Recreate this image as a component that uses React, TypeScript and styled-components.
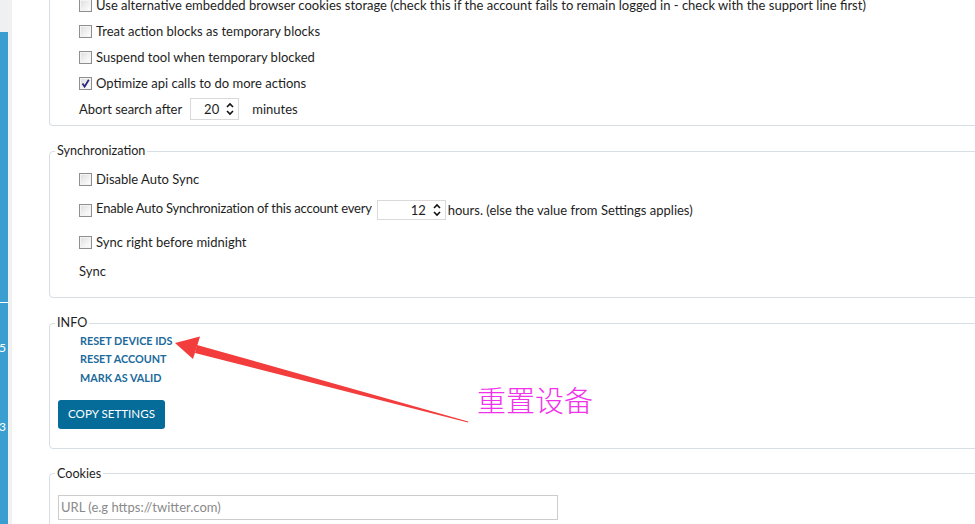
import React from 'react';
import styled, { createGlobalStyle } from 'styled-components';

const GlobalStyle = createGlobalStyle`
  html, body {
    margin: 0;
    padding: 0;
    background: #ffffff;
  }
  body {
    font-family: Lato, "Open Sans", "Liberation Sans", sans-serif;
    color: #1e1e1e;
  }
`;

const Page = styled.div`
  display: flex;
  width: 975px;
  height: 524px;
  overflow: hidden;
  position: relative;
  background: #ffffff;
`;

const Sidebar = styled.div`
  width: 8px;
  flex: none;
  display: flex;
  flex-direction: column;
  background: #3a9fd0;
  border-right: 4px solid #f1f1f1;
  overflow: hidden;
`;

const SideTop = styled.div`
  height: 32px;
  background: #eef0f1;
`;

const SideBlock = styled.div<{ h: number }>`
  height: ${({ h }) => h}px;
  border-bottom: 1px solid #ffffff;
`;

const SideItem = styled.div<{ h: number }>`
  height: ${({ h }) => h}px;
  display: flex;
  align-items: center;
  justify-content: flex-end;
  padding-right: 2px;
  color: #ffffff;
  font-size: 12px;
  white-space: nowrap;
`;

const Main = styled.div`
  flex: 1;
  padding-left: 37px;
  margin-right: -40px;
  display: flex;
  flex-direction: column;
  gap: 18px;
`;

const Fieldset = styled.fieldset<{ cut?: boolean }>`
  margin: ${({ cut }) => (cut ? '-8px 0 0 0' : '0')};
  border: 1px solid #d7dee5;
  border-top: ${({ cut }) => (cut ? 'none' : '1px solid #d7dee5')};
  border-radius: ${({ cut }) => (cut ? '0 0 4px 4px' : '4px')};
  padding: 0 0 0 5px;
  min-width: 0;
`;

const Legend = styled.legend`
  font-size: 12.6px;
  line-height: 14px;
  padding: 0 2px;
  color: #1e1e1e;
`;

const Body = styled.div<{ pt?: number; pb: number }>`
  padding: ${({ pt }) => pt ?? 0}px 0 ${({ pb }) => pb}px 24px;
  display: flex;
  flex-direction: column;
  align-items: flex-start;
`;

const Row = styled.div<{ h: number }>`
  height: ${({ h }) => h}px;
  display: flex;
  align-items: center;
  font-size: 13px;
  white-space: nowrap;
`;

const Box = styled.span`
  width: 11px;
  height: 11px;
  border: 1px solid #8e8f8f;
  background: linear-gradient(135deg, #dcdcdc 0%, #f3f3f3 60%, #ffffff 100%);
  box-shadow: inset 0 0 0 1px #f4f4f4;
  margin-right: 4px;
  display: flex;
  align-items: center;
  justify-content: center;
  flex: none;
`;

const Label = styled.span<{ lift?: number; tight?: boolean }>`
  margin-top: ${({ lift }) => -(lift ?? 0)}px;
  letter-spacing: ${({ tight }) => (tight ? '-0.2px' : 'normal')};
`;

const Spinner = styled.div<{ w: number; h: number; ml: number; mr: number }>`
  width: ${({ w }) => w}px;
  height: ${({ h }) => h}px;
  margin-left: ${({ ml }) => ml}px;
  margin-right: ${({ mr }) => mr}px;
  box-sizing: border-box;
  border: 1px solid #d9d9d9;
  display: flex;
  align-items: center;
  justify-content: flex-end;
  padding-right: 4px;
  gap: 7px;
  font-size: 13px;
`;

const Arrows = styled.svg`
  width: 8px;
  height: 14px;
`;

const LinkButton = styled.div`
  height: 18.5px;
  display: flex;
  align-items: center;
  padding-left: 1px;
  font-size: 10.8px;
  font-weight: 700;
  color: #1b6a9b;
`;

const Button = styled.button`
  margin-top: 13px;
  margin-left: -21px;
  height: 29px;
  width: 107px;
  border: none;
  border-radius: 3px;
  background: #056b99;
  color: #ffffff;
  font-family: inherit;
  font-size: 11.6px;
  padding: 0 0 2px 0;
`;

const Input = styled.input`
  margin-left: -21px;
  width: 500px;
  height: 25px;
  box-sizing: border-box;
  border: 1px solid #cccccc;
  padding: 0 2px;
  font-family: inherit;
  font-size: 13px;
  color: #333;
  &::placeholder {
    color: #8a8a8a;
  }
`;

const Overlay = styled.svg`
  position: absolute;
  left: 0;
  top: 0;
  width: 975px;
  height: 524px;
  pointer-events: none;
`;

const Note = styled.div`
  position: absolute;
  left: 477px;
  top: 378px;
  font-family: "Noto Sans CJK SC", sans-serif;
  font-size: 29px;
  font-weight: 300;
  color: #f032ea;
`;

const Check = () => (
  <svg width="9" height="9" viewBox="0 0 9 9">
    <path d="M1.5 4.5 L3.6 7.6 L7.8 0.8" fill="none" stroke="#27287a" strokeWidth="1.8" />
  </svg>
);

const UpDown = () => (
  <Arrows viewBox="0 0 8 14">
    <path d="M1 5 L4 2 L7 5" fill="none" stroke="#111" strokeWidth="1.6" />
    <path d="M1 9 L4 12 L7 9" fill="none" stroke="#111" strokeWidth="1.6" />
  </Arrows>
);

const CheckRow = ({ h, label, checked }: { h: number; label: string; checked?: boolean }) => (
  <Row h={h}>
    <Box>{checked && <Check />}</Box>
    <Label>{label}</Label>
  </Row>
);

export default function App() {
  return (
    <>
      <GlobalStyle />
      <Page>
        <Sidebar>
          <SideTop />
          <SideBlock h={270} />
          <SideItem h={88}>5</SideItem>
          <SideItem h={70}>3</SideItem>
        </Sidebar>
        <Main>
          <Fieldset cut>
            <Body pb={3}>
              <CheckRow
                h={26}
                label="Use alternative embedded browser cookies storage (check this if the account fails to remain logged in - check with the support line first)"
              />
              <CheckRow h={26} label="Treat action blocks as temporary blocks" />
              <CheckRow h={26} label="Suspend tool when temporary blocked" />
              <CheckRow h={26} label="Optimize api calls to do more actions" checked />
              <Row h={26}>
                <Label>Abort search after</Label>
                <Spinner w={49} h={22} ml={8} mr={13}>
                  20
                  <UpDown />
                </Spinner>
                <Label>minutes</Label>
              </Row>
            </Body>
          </Fieldset>

          <Fieldset>
            <Legend>Synchronization</Legend>
            <Body pt={6} pb={13}>
              <CheckRow h={30} label="Disable Auto Sync" />
              <Row h={32}>
                <Box />
                <Label lift={4} tight>
                  Enable Auto Synchronization of this account every
                </Label>
                <Spinner w={69} h={20} ml={5} mr={2}>
                  12
                  <UpDown />
                </Spinner>
                <Label>hours. (else the value from Settings applies)</Label>
              </Row>
              <CheckRow h={32} label="Sync right before midnight" />
              <Row h={26}>
                <Label>Sync</Label>
              </Row>
            </Body>
          </Fieldset>

          <Fieldset>
            <Legend>INFO</Legend>
            <Body pt={1} pb={19}>
              <LinkButton>RESET DEVICE IDS</LinkButton>
              <LinkButton>RESET ACCOUNT</LinkButton>
              <LinkButton>MARK AS VALID</LinkButton>
              <Button>COPY SETTINGS</Button>
            </Body>
          </Fieldset>

          <Fieldset>
            <Legend>Cookies</Legend>
            <Body pt={14} pb={10}>
              <Input placeholder="URL (e.g https://twitter.com)" />
            </Body>
          </Fieldset>
        </Main>

        <Overlay viewBox="0 0 975 524">
          <polygon points="197,345 195,353 468,422.6 468.2,421.4" fill="#f33c3c" />
          <polygon points="175,343 200,336.5 193,359" fill="#f33c3c" />
        </Overlay>
        <Note>重置设备</Note>
      </Page>
    </>
  );
}
